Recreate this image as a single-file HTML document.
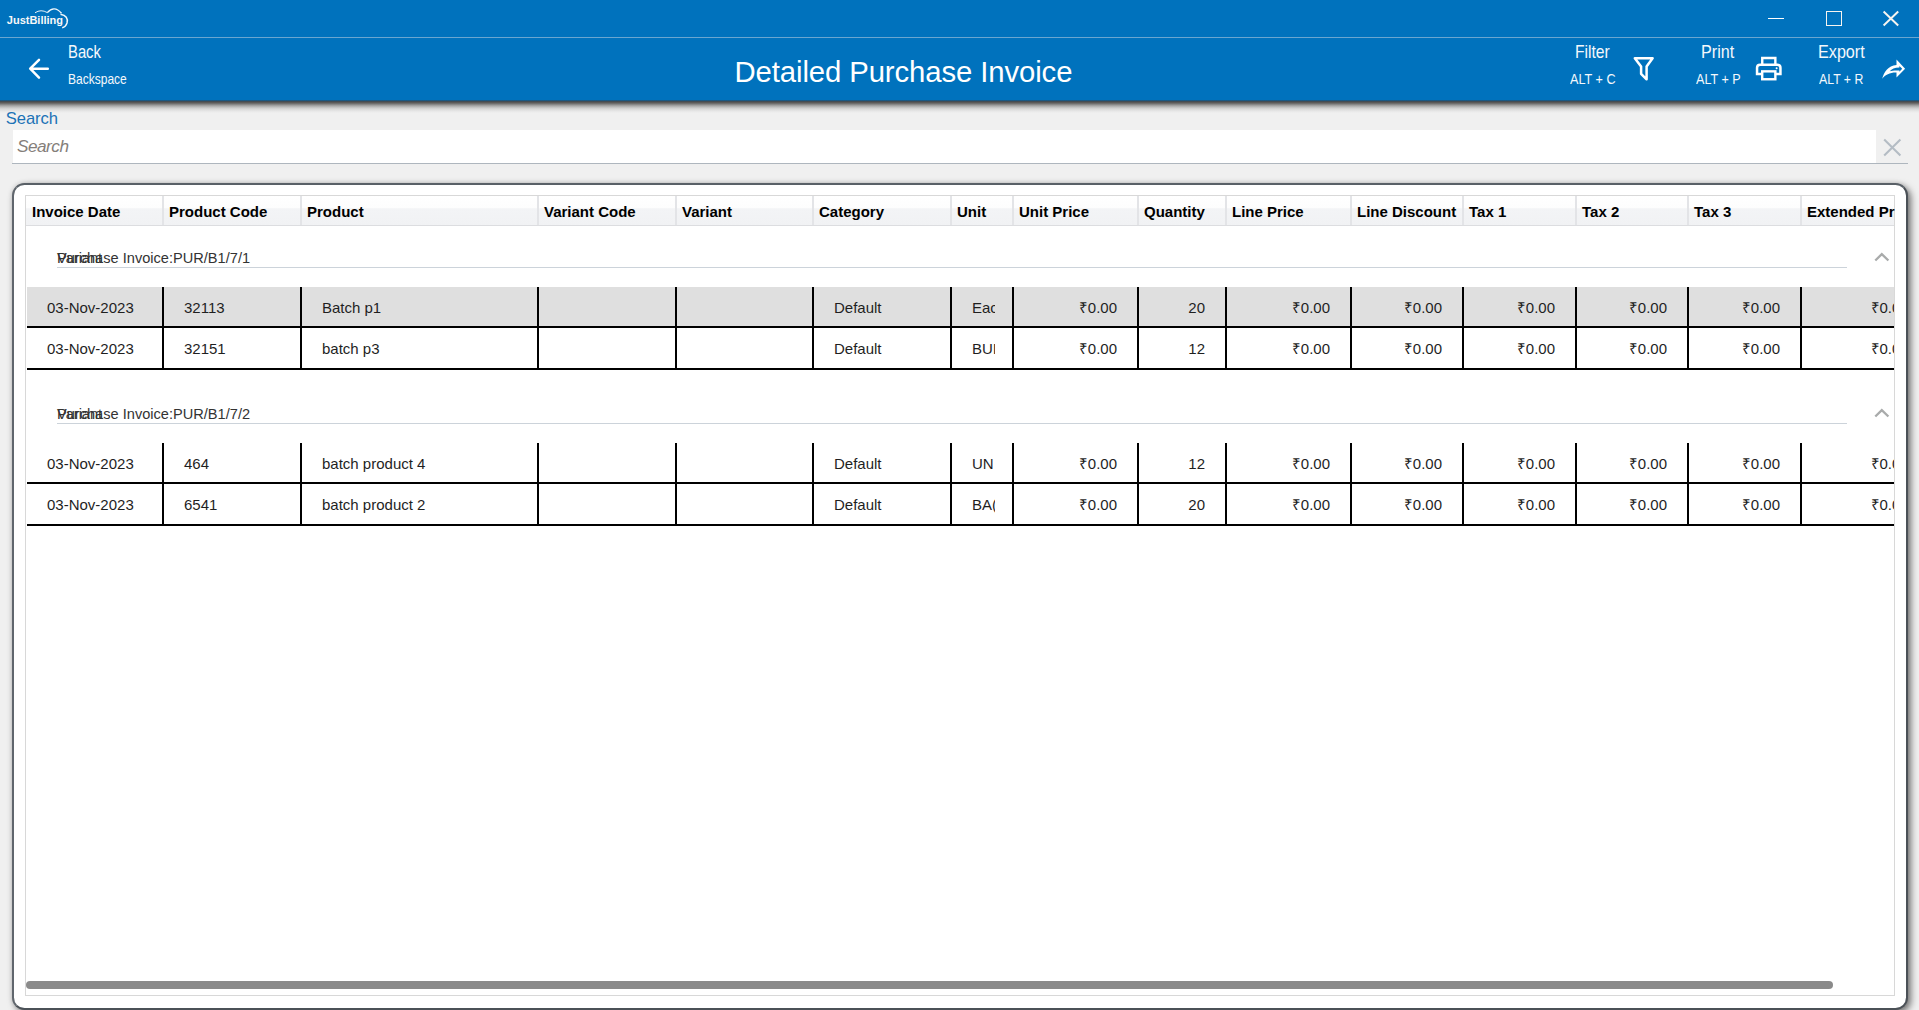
<!DOCTYPE html>
<html><head><meta charset="utf-8"><style>
html,body{margin:0;padding:0;}
body{width:1919px;height:1010px;position:relative;overflow:hidden;background:#f0f0f0;font-family:"Liberation Sans", sans-serif;}
.t{position:absolute;white-space:nowrap;}
.r{position:absolute;box-sizing:border-box;}
</style></head><body>
<div class="r" style="left:0px;top:0px;width:1919px;height:100px;background:#0072bd;"></div>
<div class="r" style="left:0px;top:37px;width:1919px;height:1px;background:#6aa6d0;"></div>
<div class="r" style="left:0;top:99.5px;width:1919px;height:13.5px;background:linear-gradient(#0068ac 0%, #2f4a60 7%, #504d4b 15%, #6a6a6a 26%, #999999 40%, #bdbdbd 54%, #d6d6d6 68%, #e6e6e6 84%, #f0f0f0 100%);"></div>
<div class="t" style="left:6.8px;top:14.99px;font-size:11px;line-height:11px;color:#f8f8f8;font-weight:700;font-style:normal;letter-spacing:0px;">JustBilling</div>
<svg class="r" style="left:0;top:0" width="80" height="37" viewBox="0 0 80 37">
<path d="M35 12.8 Q41 8.8 47.3 12.6" fill="none" stroke="#fff" stroke-width="1" opacity="0.9"/>
<path d="M47.3 12.6 Q54 4.8 61.5 13.2" fill="none" stroke="#fff" stroke-width="1.4" opacity="0.95"/>
<path d="M60.5 14.2 Q68.8 16 67 23 Q65.6 27 62.2 27.8" fill="none" stroke="#fff" stroke-width="1.5" opacity="0.95"/>
</svg>
<div class="r" style="left:1768px;top:18px;width:15.5px;height:1.2px;background:#ffffff;"></div>
<div class="r" style="left:1826px;top:11px;width:16px;height:15.2px;border:1.4px solid #f6f4f0;"></div>
<svg class="r" style="left:1882px;top:9px" width="20" height="20" viewBox="0 0 20 20">
<path d="M1.6 2.6 L16.2 16.4 M16.2 2.6 L1.6 16.4" stroke="#f6f4f0" stroke-width="2" fill="none"/></svg>
<svg class="r" style="left:24px;top:54px" width="30" height="30" viewBox="0 0 30 30">
<path d="M23.8 14.7 H7 M15 5.9 L6.2 14.7 L15 23.6" stroke="#fff" stroke-width="2.5" fill="none" stroke-linecap="round" stroke-linejoin="round"/></svg>
<div class="t" style="left:68px;top:42.83px;font-size:18.75px;line-height:18.75px;color:#f4f8fc;font-weight:400;font-style:normal;transform:scaleX(0.79);transform-origin:0 0;">Back</div>
<div class="t" style="left:67.5px;top:71.88px;font-size:14.2px;line-height:14.2px;color:#f4f8fc;font-weight:400;font-style:normal;transform:scaleX(0.847);transform-origin:0 0;">Backspace</div>
<div class="t" style="left:734.5px;top:56.50px;font-size:29.3px;line-height:29.3px;color:#ffffff;font-weight:400;font-style:normal;letter-spacing:-0.1px;">Detailed Purchase Invoice</div>
<div class="t" style="left:1574.8px;top:42.96px;font-size:18.6px;line-height:18.6px;color:#f4f8fc;font-weight:400;font-style:normal;transform:scaleX(0.842);transform-origin:0 0;">Filter</div>
<div class="t" style="left:1569.8px;top:71.68px;font-size:14.2px;line-height:14.2px;color:#f4f8fc;font-weight:400;font-style:normal;transform:scaleX(0.89);transform-origin:0 0;">ALT + C</div>
<svg class="r" style="left:1628px;top:52px" width="32" height="34" viewBox="0 0 32 34">
<path d="M6.8 6.3 H24.6 L18.6 14.6 V27.3 L13.1 21.8 V14.6 Z" stroke="#fff" stroke-width="2.5" fill="none" stroke-linejoin="round"/></svg>
<div class="t" style="left:1701px;top:42.96px;font-size:18.6px;line-height:18.6px;color:#f4f8fc;font-weight:400;font-style:normal;transform:scaleX(0.868);transform-origin:0 0;">Print</div>
<div class="t" style="left:1695.8px;top:71.68px;font-size:14.2px;line-height:14.2px;color:#f4f8fc;font-weight:400;font-style:normal;transform:scaleX(0.886);transform-origin:0 0;">ALT + P</div>
<svg class="r" style="left:1752px;top:52px" width="34" height="34" viewBox="0 0 34 34">
<path d="M10.25 12.65 V6.05 H23.35 V12.65" stroke="#fff" stroke-width="2.4" fill="none"/>
<path d="M10.2 21.95 H5.05 V15.7 Q5.05 12.65 8.1 12.65 H25.4 Q28.45 12.65 28.45 15.7 V21.95 H23.35" stroke="#fff" stroke-width="2.5" fill="none"/>
<rect x="10.2" y="19.35" width="13.15" height="7.9" stroke="#fff" stroke-width="2.4" fill="none"/>
<circle cx="24.6" cy="16.3" r="1" fill="#fff"/></svg>
<div class="t" style="left:1818px;top:42.96px;font-size:18.6px;line-height:18.6px;color:#f4f8fc;font-weight:400;font-style:normal;transform:scaleX(0.87);transform-origin:0 0;">Export</div>
<div class="t" style="left:1819.2px;top:71.68px;font-size:14.2px;line-height:14.2px;color:#f4f8fc;font-weight:400;font-style:normal;transform:scaleX(0.868);transform-origin:0 0;">ALT + R</div>
<svg class="r" style="left:1876px;top:54px" width="34" height="30" viewBox="0 0 34 30">
<path fill-rule="evenodd" fill="#fff" d="M6.2 24.8 C7.8 18.5 12 11.6 20.5 11 L20.5 5.6 L29.1 14.85 L20.5 23.6 L20.5 18.6 C14 18.4 9.5 20.8 6.2 24.8 Z
M13.7 17.3 C15.8 14.6 18.5 13.4 23.4 13.4 L23.4 12 L26.2 14.85 L23.4 17.7 L23.4 16.6 C19 16.4 16 16.6 13.7 17.3 Z"/></svg>
<div class="t" style="left:5.8px;top:111.15px;font-size:16.6px;line-height:16.6px;color:#1b72b6;font-weight:400;font-style:normal;letter-spacing:-0.1px;">Search</div>
<div class="r" style="left:12.5px;top:130px;width:1863.5px;height:33px;background:#ffffff;"></div>
<div class="r" style="left:12px;top:163px;width:1895.5px;height:1px;background:#aeb6be;"></div>
<div class="t" style="left:17px;top:138.24px;font-size:17.2px;line-height:17.2px;color:#847e7a;font-weight:400;font-style:italic;letter-spacing:-0.5px;">Search</div>
<svg class="r" style="left:1882px;top:138px" width="22" height="22" viewBox="0 0 22 22">
<path d="M2.2 1.6 L18.4 17.4 M18.4 1.6 L2.2 17.4" stroke="#b4bcc4" stroke-width="2.1" fill="none"/></svg>
<div class="r" style="left:12px;top:183px;width:1896px;height:827px;background:#fff;border:2px solid #4b5157;border-top-color:#596067;border-left-color:#60666d;border-radius:12.5px;box-shadow:3px 3px 7px rgba(0,0,0,0.5), 0 0 5px rgba(0,0,0,0.12);"></div>
<div class="r" style="left:25px;top:195px;width:1870px;height:801px;border:1px solid #d8d8d8;"></div>
<div class="r" style="left:0;top:0;width:1894.5px;height:1010px;overflow:hidden;">
<div class="r" style="left:26px;top:196px;width:1868px;height:29px;background:linear-gradient(#ffffff 0%,#fdfdfd 40%,#f3f4f6 44%,#f1f2f4 100%);"></div>
<div class="r" style="left:26px;top:225px;width:1868px;height:1px;background:#dcdde0;"></div>
<div class="r" style="left:162px;top:196px;width:2px;height:29px;background:#e3e4e7;"></div>
<div class="r" style="left:300px;top:196px;width:2px;height:29px;background:#e3e4e7;"></div>
<div class="r" style="left:537px;top:196px;width:2px;height:29px;background:#e3e4e7;"></div>
<div class="r" style="left:675px;top:196px;width:2px;height:29px;background:#e3e4e7;"></div>
<div class="r" style="left:812px;top:196px;width:2px;height:29px;background:#e3e4e7;"></div>
<div class="r" style="left:950px;top:196px;width:2px;height:29px;background:#e3e4e7;"></div>
<div class="r" style="left:1012px;top:196px;width:2px;height:29px;background:#e3e4e7;"></div>
<div class="r" style="left:1137px;top:196px;width:2px;height:29px;background:#e3e4e7;"></div>
<div class="r" style="left:1225px;top:196px;width:2px;height:29px;background:#e3e4e7;"></div>
<div class="r" style="left:1350px;top:196px;width:2px;height:29px;background:#e3e4e7;"></div>
<div class="r" style="left:1462px;top:196px;width:2px;height:29px;background:#e3e4e7;"></div>
<div class="r" style="left:1575px;top:196px;width:2px;height:29px;background:#e3e4e7;"></div>
<div class="r" style="left:1687px;top:196px;width:2px;height:29px;background:#e3e4e7;"></div>
<div class="r" style="left:1800px;top:196px;width:2px;height:29px;background:#e3e4e7;"></div>
<div class="t" style="left:32px;top:204.10px;font-size:15px;line-height:15px;color:#000000;font-weight:700;font-style:normal;">Invoice Date</div>
<div class="t" style="left:169px;top:204.10px;font-size:15px;line-height:15px;color:#000000;font-weight:700;font-style:normal;">Product Code</div>
<div class="t" style="left:307px;top:204.10px;font-size:15px;line-height:15px;color:#000000;font-weight:700;font-style:normal;">Product</div>
<div class="t" style="left:544px;top:204.10px;font-size:15px;line-height:15px;color:#000000;font-weight:700;font-style:normal;">Variant Code</div>
<div class="t" style="left:682px;top:204.10px;font-size:15px;line-height:15px;color:#000000;font-weight:700;font-style:normal;">Variant</div>
<div class="t" style="left:819px;top:204.10px;font-size:15px;line-height:15px;color:#000000;font-weight:700;font-style:normal;">Category</div>
<div class="t" style="left:957px;top:204.10px;font-size:15px;line-height:15px;color:#000000;font-weight:700;font-style:normal;">Unit</div>
<div class="t" style="left:1019px;top:204.10px;font-size:15px;line-height:15px;color:#000000;font-weight:700;font-style:normal;">Unit Price</div>
<div class="t" style="left:1144px;top:204.10px;font-size:15px;line-height:15px;color:#000000;font-weight:700;font-style:normal;">Quantity</div>
<div class="t" style="left:1232px;top:204.10px;font-size:15px;line-height:15px;color:#000000;font-weight:700;font-style:normal;">Line Price</div>
<div class="t" style="left:1357px;top:204.10px;font-size:15px;line-height:15px;color:#000000;font-weight:700;font-style:normal;">Line Discount</div>
<div class="t" style="left:1469px;top:204.10px;font-size:15px;line-height:15px;color:#000000;font-weight:700;font-style:normal;">Tax 1</div>
<div class="t" style="left:1582px;top:204.10px;font-size:15px;line-height:15px;color:#000000;font-weight:700;font-style:normal;">Tax 2</div>
<div class="t" style="left:1694px;top:204.10px;font-size:15px;line-height:15px;color:#000000;font-weight:700;font-style:normal;">Tax 3</div>
<div class="t" style="left:1807px;top:204.10px;font-size:15px;line-height:15px;color:#000000;font-weight:700;font-style:normal;">Extended Price</div>
<div class="t" style="left:57px;top:250.74px;font-size:14.6px;line-height:14.6px;color:#333333;font-weight:400;font-style:normal;">Purchase Invoice:PUR/B1/7/1</div>
<div class="t" style="left:57px;top:250.74px;font-size:14.6px;line-height:14.6px;color:#333333;font-weight:400;font-style:normal;">Variant</div>
<div class="r" style="left:57px;top:267.3px;width:1790px;height:1px;background:#ccd3da;"></div>
<svg class="r" style="left:1872px;top:250.7px" width="20" height="14" viewBox="0 0 20 14">
<path d="M3.3 9.5 L9.8 3.1 L16.4 9.5" stroke="#a9abab" stroke-width="2.3" fill="none"/></svg>
<div class="t" style="left:57px;top:406.84px;font-size:14.6px;line-height:14.6px;color:#333333;font-weight:400;font-style:normal;">Purchase Invoice:PUR/B1/7/2</div>
<div class="t" style="left:57px;top:406.84px;font-size:14.6px;line-height:14.6px;color:#333333;font-weight:400;font-style:normal;">Variant</div>
<div class="r" style="left:57px;top:423.40000000000003px;width:1790px;height:1px;background:#ccd3da;"></div>
<svg class="r" style="left:1872px;top:406.8px" width="20" height="14" viewBox="0 0 20 14">
<path d="M3.3 9.5 L9.8 3.1 L16.4 9.5" stroke="#a9abab" stroke-width="2.3" fill="none"/></svg>
<div class="r" style="left:27px;top:287px;width:1867px;height:39px;background:#dfdfdf;"></div>
<div class="r" style="left:27px;top:326px;width:1867px;height:2px;background:#000000;"></div>
<div class="r" style="left:162px;top:287px;width:2px;height:41px;background:#000000;"></div>
<div class="r" style="left:300px;top:287px;width:2px;height:41px;background:#000000;"></div>
<div class="r" style="left:537px;top:287px;width:2px;height:41px;background:#000000;"></div>
<div class="r" style="left:675px;top:287px;width:2px;height:41px;background:#000000;"></div>
<div class="r" style="left:812px;top:287px;width:2px;height:41px;background:#000000;"></div>
<div class="r" style="left:950px;top:287px;width:2px;height:41px;background:#000000;"></div>
<div class="r" style="left:1012px;top:287px;width:2px;height:41px;background:#000000;"></div>
<div class="r" style="left:1137px;top:287px;width:2px;height:41px;background:#000000;"></div>
<div class="r" style="left:1225px;top:287px;width:2px;height:41px;background:#000000;"></div>
<div class="r" style="left:1350px;top:287px;width:2px;height:41px;background:#000000;"></div>
<div class="r" style="left:1462px;top:287px;width:2px;height:41px;background:#000000;"></div>
<div class="r" style="left:1575px;top:287px;width:2px;height:41px;background:#000000;"></div>
<div class="r" style="left:1687px;top:287px;width:2px;height:41px;background:#000000;"></div>
<div class="r" style="left:1800px;top:287px;width:2px;height:41px;background:#000000;"></div>
<div class="t" style="left:47px;top:299.60px;font-size:15px;line-height:15px;color:#1f1f1f;font-weight:400;font-style:normal;">03-Nov-2023</div>
<div class="t" style="left:184px;top:299.60px;font-size:15px;line-height:15px;color:#1f1f1f;font-weight:400;font-style:normal;">32113</div>
<div class="t" style="left:322px;top:299.60px;font-size:15px;line-height:15px;color:#1f1f1f;font-weight:400;font-style:normal;">Batch p1</div>
<div class="t" style="left:834px;top:299.60px;font-size:15px;line-height:15px;color:#1f1f1f;font-weight:400;font-style:normal;">Default</div>
<div class="r" style="left:972px;top:287px;width:23px;height:39px;overflow:hidden;"><div class="t" style="left:0px;top:12.80px;font-size:15px;line-height:15px;color:#1f1f1f;font-weight:400;font-style:normal;">Eac</div></div>
<div class="t" style="left:817px;width:300px;top:299.60px;font-size:15px;line-height:15px;color:#1f1f1f;font-weight:400;text-align:right;">₹0.00</div>
<div class="t" style="left:905px;width:300px;top:299.60px;font-size:15px;line-height:15px;color:#1f1f1f;font-weight:400;text-align:right;">20</div>
<div class="t" style="left:1030px;width:300px;top:299.60px;font-size:15px;line-height:15px;color:#1f1f1f;font-weight:400;text-align:right;">₹0.00</div>
<div class="t" style="left:1142px;width:300px;top:299.60px;font-size:15px;line-height:15px;color:#1f1f1f;font-weight:400;text-align:right;">₹0.00</div>
<div class="t" style="left:1255px;width:300px;top:299.60px;font-size:15px;line-height:15px;color:#1f1f1f;font-weight:400;text-align:right;">₹0.00</div>
<div class="t" style="left:1367px;width:300px;top:299.60px;font-size:15px;line-height:15px;color:#1f1f1f;font-weight:400;text-align:right;">₹0.00</div>
<div class="t" style="left:1480px;width:300px;top:299.60px;font-size:15px;line-height:15px;color:#1f1f1f;font-weight:400;text-align:right;">₹0.00</div>
<div class="r" style="left:1801px;top:287px;width:93px;height:39px;overflow:hidden;"><div class="t" style="left:69.5px;top:12.80px;font-size:15px;line-height:15px;color:#1f1f1f;font-weight:400;font-style:normal;">₹0.00</div></div>
<div class="r" style="left:27px;top:328px;width:1867px;height:40px;background:#ffffff;"></div>
<div class="r" style="left:27px;top:368px;width:1867px;height:2px;background:#000000;"></div>
<div class="r" style="left:162px;top:328px;width:2px;height:42px;background:#000000;"></div>
<div class="r" style="left:300px;top:328px;width:2px;height:42px;background:#000000;"></div>
<div class="r" style="left:537px;top:328px;width:2px;height:42px;background:#000000;"></div>
<div class="r" style="left:675px;top:328px;width:2px;height:42px;background:#000000;"></div>
<div class="r" style="left:812px;top:328px;width:2px;height:42px;background:#000000;"></div>
<div class="r" style="left:950px;top:328px;width:2px;height:42px;background:#000000;"></div>
<div class="r" style="left:1012px;top:328px;width:2px;height:42px;background:#000000;"></div>
<div class="r" style="left:1137px;top:328px;width:2px;height:42px;background:#000000;"></div>
<div class="r" style="left:1225px;top:328px;width:2px;height:42px;background:#000000;"></div>
<div class="r" style="left:1350px;top:328px;width:2px;height:42px;background:#000000;"></div>
<div class="r" style="left:1462px;top:328px;width:2px;height:42px;background:#000000;"></div>
<div class="r" style="left:1575px;top:328px;width:2px;height:42px;background:#000000;"></div>
<div class="r" style="left:1687px;top:328px;width:2px;height:42px;background:#000000;"></div>
<div class="r" style="left:1800px;top:328px;width:2px;height:42px;background:#000000;"></div>
<div class="t" style="left:47px;top:341.10px;font-size:15px;line-height:15px;color:#1f1f1f;font-weight:400;font-style:normal;">03-Nov-2023</div>
<div class="t" style="left:184px;top:341.10px;font-size:15px;line-height:15px;color:#1f1f1f;font-weight:400;font-style:normal;">32151</div>
<div class="t" style="left:322px;top:341.10px;font-size:15px;line-height:15px;color:#1f1f1f;font-weight:400;font-style:normal;">batch p3</div>
<div class="t" style="left:834px;top:341.10px;font-size:15px;line-height:15px;color:#1f1f1f;font-weight:400;font-style:normal;">Default</div>
<div class="r" style="left:972px;top:328px;width:23px;height:40px;overflow:hidden;"><div class="t" style="left:0px;top:12.80px;font-size:15px;line-height:15px;color:#1f1f1f;font-weight:400;font-style:normal;">BUI</div></div>
<div class="t" style="left:817px;width:300px;top:341.10px;font-size:15px;line-height:15px;color:#1f1f1f;font-weight:400;text-align:right;">₹0.00</div>
<div class="t" style="left:905px;width:300px;top:341.10px;font-size:15px;line-height:15px;color:#1f1f1f;font-weight:400;text-align:right;">12</div>
<div class="t" style="left:1030px;width:300px;top:341.10px;font-size:15px;line-height:15px;color:#1f1f1f;font-weight:400;text-align:right;">₹0.00</div>
<div class="t" style="left:1142px;width:300px;top:341.10px;font-size:15px;line-height:15px;color:#1f1f1f;font-weight:400;text-align:right;">₹0.00</div>
<div class="t" style="left:1255px;width:300px;top:341.10px;font-size:15px;line-height:15px;color:#1f1f1f;font-weight:400;text-align:right;">₹0.00</div>
<div class="t" style="left:1367px;width:300px;top:341.10px;font-size:15px;line-height:15px;color:#1f1f1f;font-weight:400;text-align:right;">₹0.00</div>
<div class="t" style="left:1480px;width:300px;top:341.10px;font-size:15px;line-height:15px;color:#1f1f1f;font-weight:400;text-align:right;">₹0.00</div>
<div class="r" style="left:1801px;top:328px;width:93px;height:40px;overflow:hidden;"><div class="t" style="left:69.5px;top:12.80px;font-size:15px;line-height:15px;color:#1f1f1f;font-weight:400;font-style:normal;">₹0.00</div></div>
<div class="r" style="left:27px;top:443px;width:1867px;height:39px;background:#ffffff;"></div>
<div class="r" style="left:27px;top:482px;width:1867px;height:2px;background:#000000;"></div>
<div class="r" style="left:162px;top:443px;width:2px;height:41px;background:#000000;"></div>
<div class="r" style="left:300px;top:443px;width:2px;height:41px;background:#000000;"></div>
<div class="r" style="left:537px;top:443px;width:2px;height:41px;background:#000000;"></div>
<div class="r" style="left:675px;top:443px;width:2px;height:41px;background:#000000;"></div>
<div class="r" style="left:812px;top:443px;width:2px;height:41px;background:#000000;"></div>
<div class="r" style="left:950px;top:443px;width:2px;height:41px;background:#000000;"></div>
<div class="r" style="left:1012px;top:443px;width:2px;height:41px;background:#000000;"></div>
<div class="r" style="left:1137px;top:443px;width:2px;height:41px;background:#000000;"></div>
<div class="r" style="left:1225px;top:443px;width:2px;height:41px;background:#000000;"></div>
<div class="r" style="left:1350px;top:443px;width:2px;height:41px;background:#000000;"></div>
<div class="r" style="left:1462px;top:443px;width:2px;height:41px;background:#000000;"></div>
<div class="r" style="left:1575px;top:443px;width:2px;height:41px;background:#000000;"></div>
<div class="r" style="left:1687px;top:443px;width:2px;height:41px;background:#000000;"></div>
<div class="r" style="left:1800px;top:443px;width:2px;height:41px;background:#000000;"></div>
<div class="t" style="left:47px;top:455.60px;font-size:15px;line-height:15px;color:#1f1f1f;font-weight:400;font-style:normal;">03-Nov-2023</div>
<div class="t" style="left:184px;top:455.60px;font-size:15px;line-height:15px;color:#1f1f1f;font-weight:400;font-style:normal;">464</div>
<div class="t" style="left:322px;top:455.60px;font-size:15px;line-height:15px;color:#1f1f1f;font-weight:400;font-style:normal;">batch product 4</div>
<div class="t" style="left:834px;top:455.60px;font-size:15px;line-height:15px;color:#1f1f1f;font-weight:400;font-style:normal;">Default</div>
<div class="r" style="left:972px;top:443px;width:23px;height:39px;overflow:hidden;"><div class="t" style="left:0px;top:12.80px;font-size:15px;line-height:15px;color:#1f1f1f;font-weight:400;font-style:normal;">UN</div></div>
<div class="t" style="left:817px;width:300px;top:455.60px;font-size:15px;line-height:15px;color:#1f1f1f;font-weight:400;text-align:right;">₹0.00</div>
<div class="t" style="left:905px;width:300px;top:455.60px;font-size:15px;line-height:15px;color:#1f1f1f;font-weight:400;text-align:right;">12</div>
<div class="t" style="left:1030px;width:300px;top:455.60px;font-size:15px;line-height:15px;color:#1f1f1f;font-weight:400;text-align:right;">₹0.00</div>
<div class="t" style="left:1142px;width:300px;top:455.60px;font-size:15px;line-height:15px;color:#1f1f1f;font-weight:400;text-align:right;">₹0.00</div>
<div class="t" style="left:1255px;width:300px;top:455.60px;font-size:15px;line-height:15px;color:#1f1f1f;font-weight:400;text-align:right;">₹0.00</div>
<div class="t" style="left:1367px;width:300px;top:455.60px;font-size:15px;line-height:15px;color:#1f1f1f;font-weight:400;text-align:right;">₹0.00</div>
<div class="t" style="left:1480px;width:300px;top:455.60px;font-size:15px;line-height:15px;color:#1f1f1f;font-weight:400;text-align:right;">₹0.00</div>
<div class="r" style="left:1801px;top:443px;width:93px;height:39px;overflow:hidden;"><div class="t" style="left:69.5px;top:12.80px;font-size:15px;line-height:15px;color:#1f1f1f;font-weight:400;font-style:normal;">₹0.00</div></div>
<div class="r" style="left:27px;top:484px;width:1867px;height:40px;background:#ffffff;"></div>
<div class="r" style="left:27px;top:524px;width:1867px;height:2px;background:#000000;"></div>
<div class="r" style="left:162px;top:484px;width:2px;height:42px;background:#000000;"></div>
<div class="r" style="left:300px;top:484px;width:2px;height:42px;background:#000000;"></div>
<div class="r" style="left:537px;top:484px;width:2px;height:42px;background:#000000;"></div>
<div class="r" style="left:675px;top:484px;width:2px;height:42px;background:#000000;"></div>
<div class="r" style="left:812px;top:484px;width:2px;height:42px;background:#000000;"></div>
<div class="r" style="left:950px;top:484px;width:2px;height:42px;background:#000000;"></div>
<div class="r" style="left:1012px;top:484px;width:2px;height:42px;background:#000000;"></div>
<div class="r" style="left:1137px;top:484px;width:2px;height:42px;background:#000000;"></div>
<div class="r" style="left:1225px;top:484px;width:2px;height:42px;background:#000000;"></div>
<div class="r" style="left:1350px;top:484px;width:2px;height:42px;background:#000000;"></div>
<div class="r" style="left:1462px;top:484px;width:2px;height:42px;background:#000000;"></div>
<div class="r" style="left:1575px;top:484px;width:2px;height:42px;background:#000000;"></div>
<div class="r" style="left:1687px;top:484px;width:2px;height:42px;background:#000000;"></div>
<div class="r" style="left:1800px;top:484px;width:2px;height:42px;background:#000000;"></div>
<div class="t" style="left:47px;top:497.10px;font-size:15px;line-height:15px;color:#1f1f1f;font-weight:400;font-style:normal;">03-Nov-2023</div>
<div class="t" style="left:184px;top:497.10px;font-size:15px;line-height:15px;color:#1f1f1f;font-weight:400;font-style:normal;">6541</div>
<div class="t" style="left:322px;top:497.10px;font-size:15px;line-height:15px;color:#1f1f1f;font-weight:400;font-style:normal;">batch product 2</div>
<div class="t" style="left:834px;top:497.10px;font-size:15px;line-height:15px;color:#1f1f1f;font-weight:400;font-style:normal;">Default</div>
<div class="r" style="left:972px;top:484px;width:23px;height:40px;overflow:hidden;"><div class="t" style="left:0px;top:12.80px;font-size:15px;line-height:15px;color:#1f1f1f;font-weight:400;font-style:normal;">BA(</div></div>
<div class="t" style="left:817px;width:300px;top:497.10px;font-size:15px;line-height:15px;color:#1f1f1f;font-weight:400;text-align:right;">₹0.00</div>
<div class="t" style="left:905px;width:300px;top:497.10px;font-size:15px;line-height:15px;color:#1f1f1f;font-weight:400;text-align:right;">20</div>
<div class="t" style="left:1030px;width:300px;top:497.10px;font-size:15px;line-height:15px;color:#1f1f1f;font-weight:400;text-align:right;">₹0.00</div>
<div class="t" style="left:1142px;width:300px;top:497.10px;font-size:15px;line-height:15px;color:#1f1f1f;font-weight:400;text-align:right;">₹0.00</div>
<div class="t" style="left:1255px;width:300px;top:497.10px;font-size:15px;line-height:15px;color:#1f1f1f;font-weight:400;text-align:right;">₹0.00</div>
<div class="t" style="left:1367px;width:300px;top:497.10px;font-size:15px;line-height:15px;color:#1f1f1f;font-weight:400;text-align:right;">₹0.00</div>
<div class="t" style="left:1480px;width:300px;top:497.10px;font-size:15px;line-height:15px;color:#1f1f1f;font-weight:400;text-align:right;">₹0.00</div>
<div class="r" style="left:1801px;top:484px;width:93px;height:40px;overflow:hidden;"><div class="t" style="left:69.5px;top:12.80px;font-size:15px;line-height:15px;color:#1f1f1f;font-weight:400;font-style:normal;">₹0.00</div></div>
</div>
<div class="r" style="left:26px;top:981px;width:1807px;height:8px;background:#8a8a8a;border-radius:4px;"></div>
</body></html>
